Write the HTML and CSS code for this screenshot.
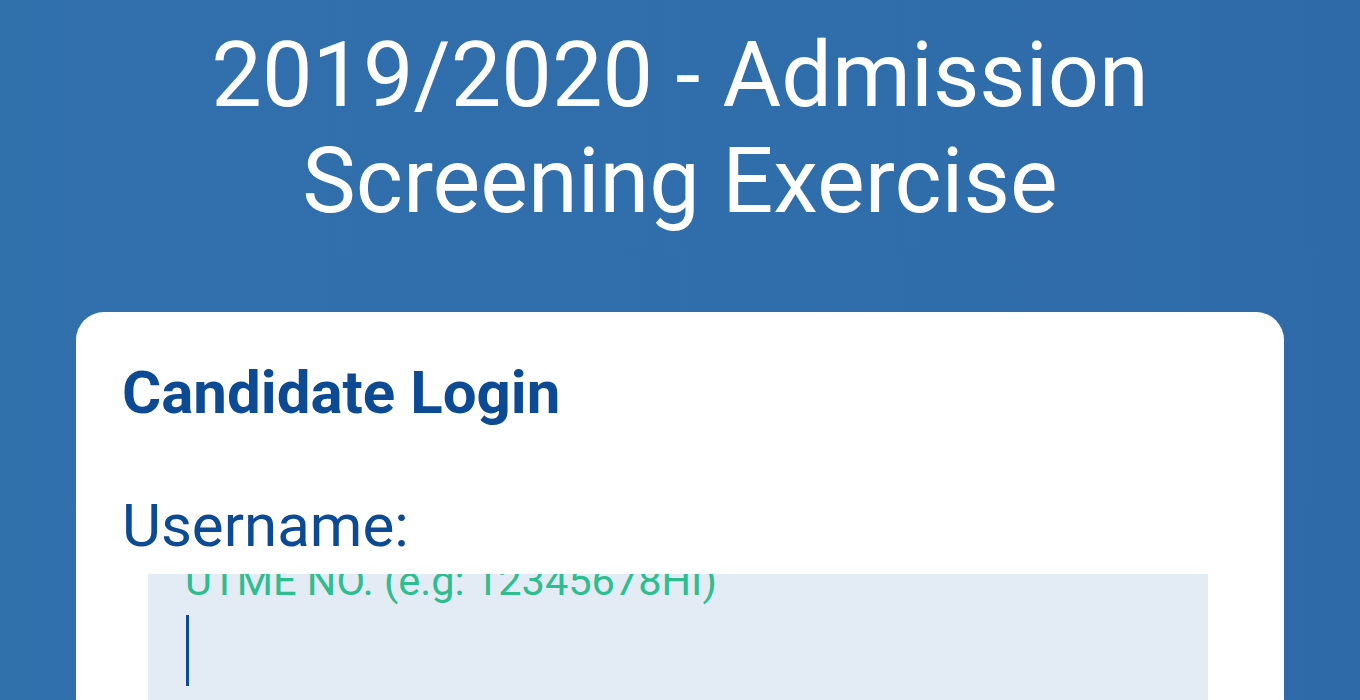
FILE: index.html
```html
<!DOCTYPE html>
<html lang="en">
<head>
    <meta charset="UTF-8">
    <title>Admission Screening Exercise</title>
    <link rel="stylesheet" href="styles.css">
</head>
<body>
    <h1 class="page-title">2019/2020 - Admission<br>Screening Exercise</h1>

    <div class="login-card">
        <h2 class="card-title">Candidate Login</h2>

        <label class="field-label" for="username">Username:</label>
        <div class="field-box" id="username">
            <span class="placeholder">UTME NO. (e.g: 12345678HI)</span>
            <span class="caret"></span>
        </div>
    </div>
</body>
</html>
```

FILE: styles.css
```css
body {
    font-family: Roboto, 'Liberation Sans', sans-serif;
    background: linear-gradient(to right, #3070ab, #306eab 60%, #2e6aa8);
    margin: 0;
    padding: 0;
    color: #fff;
    height: 700px;
    overflow: hidden;
}

.page-title {
    margin: 23px 0 0;
    font-size: 90px;
    font-weight: 400;
    line-height: 106px;
    text-align: center;
    color: #fff;
}

.login-card {
    margin: 77px 76px 0;
    padding: 47px 46px 0;
    background-color: #fff;
    border-radius: 28px;
    height: 500px;
}

.card-title {
    margin: 0;
    font-size: 60px;
    font-weight: 700;
    line-height: 68px;
    color: #0c4a93;
}

.field-label {
    display: block;
    margin-top: 66px;
    font-size: 60px;
    line-height: 66px;
    color: #0c4a93;
}

.field-box {
    margin: 15px 30px 0 26px;
    padding-left: 37px;
    height: 200px;
    background-color: #e3ebf4;
    overflow: hidden;
}

.placeholder {
    display: block;
    margin-top: -17px;
    font-size: 41.5px;
    line-height: 48px;
    color: #2dbd8f;
}

.caret {
    display: block;
    margin: 10px 0 0 1px;
    width: 3px;
    height: 71px;
    background-color: #0c4a93;
}
```
